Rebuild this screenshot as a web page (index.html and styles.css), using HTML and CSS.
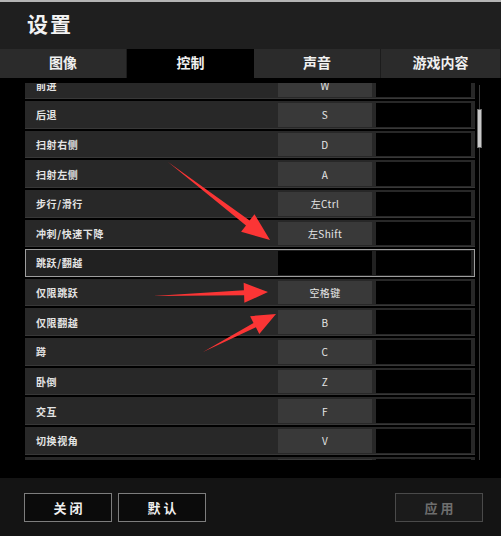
FILE: index.html
```html
<!DOCTYPE html>
<html lang="zh-CN">
<head>
<meta charset="utf-8">
<title>设置</title>
<link rel="stylesheet" href="styles.css">
</head>
<body>
<div class="app">
  <div class="topline"></div>
  <header class="header"><h1 class="title">设置</h1></header>
  <nav class="tabs">
    <div class="tab">图像</div>
    <div class="tab active">控制</div>
    <div class="tab">声音</div>
    <div class="tab">游戏内容</div>
  </nav>
  <main class="content">
    <div class="list-wrap">
      <div class="list">
        <div class="row"><span class="label">前进</span><span class="key">W</span><span class="alt"></span></div>
        <div class="row"><span class="label">后退</span><span class="key">S</span><span class="alt"></span></div>
        <div class="row"><span class="label">扫射右侧</span><span class="key">D</span><span class="alt"></span></div>
        <div class="row"><span class="label">扫射左侧</span><span class="key">A</span><span class="alt"></span></div>
        <div class="row"><span class="label">步行/滑行</span><span class="key">左Ctrl</span><span class="alt"></span></div>
        <div class="row"><span class="label">冲刺/快速下降</span><span class="key">左Shift</span><span class="alt"></span></div>
        <div class="row selected"><span class="label">跳跃/翻越</span><span class="key"></span><span class="alt"></span></div>
        <div class="row"><span class="label">仅限跳跃</span><span class="key">空格键</span><span class="alt"></span></div>
        <div class="row"><span class="label">仅限翻越</span><span class="key">B</span><span class="alt"></span></div>
        <div class="row"><span class="label">蹲</span><span class="key">C</span><span class="alt"></span></div>
        <div class="row"><span class="label">卧倒</span><span class="key">Z</span><span class="alt"></span></div>
        <div class="row"><span class="label">交互</span><span class="key">F</span><span class="alt"></span></div>
        <div class="row"><span class="label">切换视角</span><span class="key">V</span><span class="alt"></span></div>
        <div class="row"><span class="label">自由视角</span><span class="key">左Alt</span><span class="alt"></span></div>
      </div>
      <div class="scroll-track"></div>
      <div class="scroll-thumb"></div>
    </div>
  </main>
  <footer class="footer">
    <button class="btn">关闭</button>
    <button class="btn">默认</button>
    <span class="spacer"></span>
    <button class="btn disabled">应用</button>
  </footer>
</div>
<svg class="arrows" width="501" height="536" viewBox="0 0 501 536">
  <polygon points="168,162 246,225.4 241.1,231.7 270,240 254.5,214.3 249.6,220.6"/>
  <polygon points="153,296 244.1,295.3 244.35,302.8 268,292 243.65,282.8 243.9,290.3"/>
  <polygon points="203,352 255.9,327.3 259.3,334 276,314 250.1,316.2 253.5,322.9"/>
</svg>
</body>
</html>
```

FILE: styles.css
```css
* { box-sizing: border-box; }
html, body {
  margin: 0;
  padding: 0;
  width: 501px;
  height: 536px;
  overflow: hidden;
  background: #000;
  font-family: "Noto Sans CJK SC", "Noto Sans", sans-serif;
  color: #e6e6e6;
}
.app {
  display: flex;
  flex-direction: column;
  height: 536px;
}
.topline {
  height: 2px;
  background: #b4b4b4;
}
.header {
  height: 47px;
  background: #1f1f1f;
  padding: 0 0 4px 27px;
  display: flex;
  align-items: center;
}
.title {
  margin: 0;
  font-size: 21px;
  font-weight: 700;
  letter-spacing: 2px;
  color: #f2f2f2;
  line-height: 1;
}
.tabs {
  display: grid;
  grid-template-columns: 127px 127px 127px 1fr;
  height: 29px;
  background: #1f1f1f;
}
.tab {
  display: flex;
  align-items: center;
  justify-content: center;
  padding-bottom: 3px;
  background: #2b2b2b;
  font-size: 14px;
  font-weight: 700;
  color: #f0f0f0;
  border-right: 1px solid #1c1c1c;
}
.tab.active {
  background: #000;
  border-right: none;
}
.content {
  height: 400px;
  background: #000;
  padding-top: 5px;
}
.list-wrap {
  position: relative;
  height: 377px;
  overflow: hidden;
}
.list {
  display: flex;
  flex-direction: column;
  gap: 2px;
  margin-top: -11.64px;
  margin-left: 25px;
  width: 450px;
}
.row {
  height: 27.64px;
  flex: none;
  display: grid;
  grid-template-columns: 1fr 94px 95px;
  column-gap: 4px;
  padding: 2px 4px 2px 11px;
  background: #282828;
  box-shadow: inset 0 -1px 0 #383838;
}
.label {
  display: flex;
  align-items: center;
  font-size: 10px;
  font-weight: 700;
  letter-spacing: 0.6px;
  color: #e4e4e4;
  white-space: nowrap;
}
.key {
  display: flex;
  align-items: center;
  justify-content: center;
  background: #393939;
  font-size: 10px;
  letter-spacing: 0.4px;
  color: #e6e6e6;
}
.alt {
  background: #000;
}
.row.selected {
  background: #212121;
  box-shadow: inset 0 0 0 1px #9e9e9e;
}
.row.selected .key {
  background: #000;
}
.scroll-track {
  position: absolute;
  left: 479px;
  top: 2px;
  bottom: 0;
  width: 1px;
  background: #3a3a3a;
}
.scroll-thumb {
  position: absolute;
  left: 477px;
  top: 26px;
  width: 5px;
  height: 39px;
  background: #c9c9c9;
  border: 1px solid #6a6a6a;
}
.footer {
  flex: 1;
  background: #141414;
  display: flex;
  align-items: flex-start;
  gap: 6px;
  padding: 15px 18px 0 24px;
}
.spacer { flex: 1; }
.btn {
  width: 88px;
  height: 29px;
  background: #0b0b0b;
  border: 1px solid #7d7d7d;
  color: #f0f0f0;
  font-family: "Noto Sans CJK SC", "Noto Sans", sans-serif;
  font-size: 13px;
  font-weight: 700;
  letter-spacing: 3px;
  padding: 0 0 0 3px;
  line-height: 1;
}
.btn.disabled {
  background: #1b1b1b;
  border-color: #4a4a4a;
  color: #6e6e6e;
}
.arrows {
  position: absolute;
  left: 0;
  top: 0;
  pointer-events: none;
}
.arrows polygon {
  fill: #fb3535;
}
```
